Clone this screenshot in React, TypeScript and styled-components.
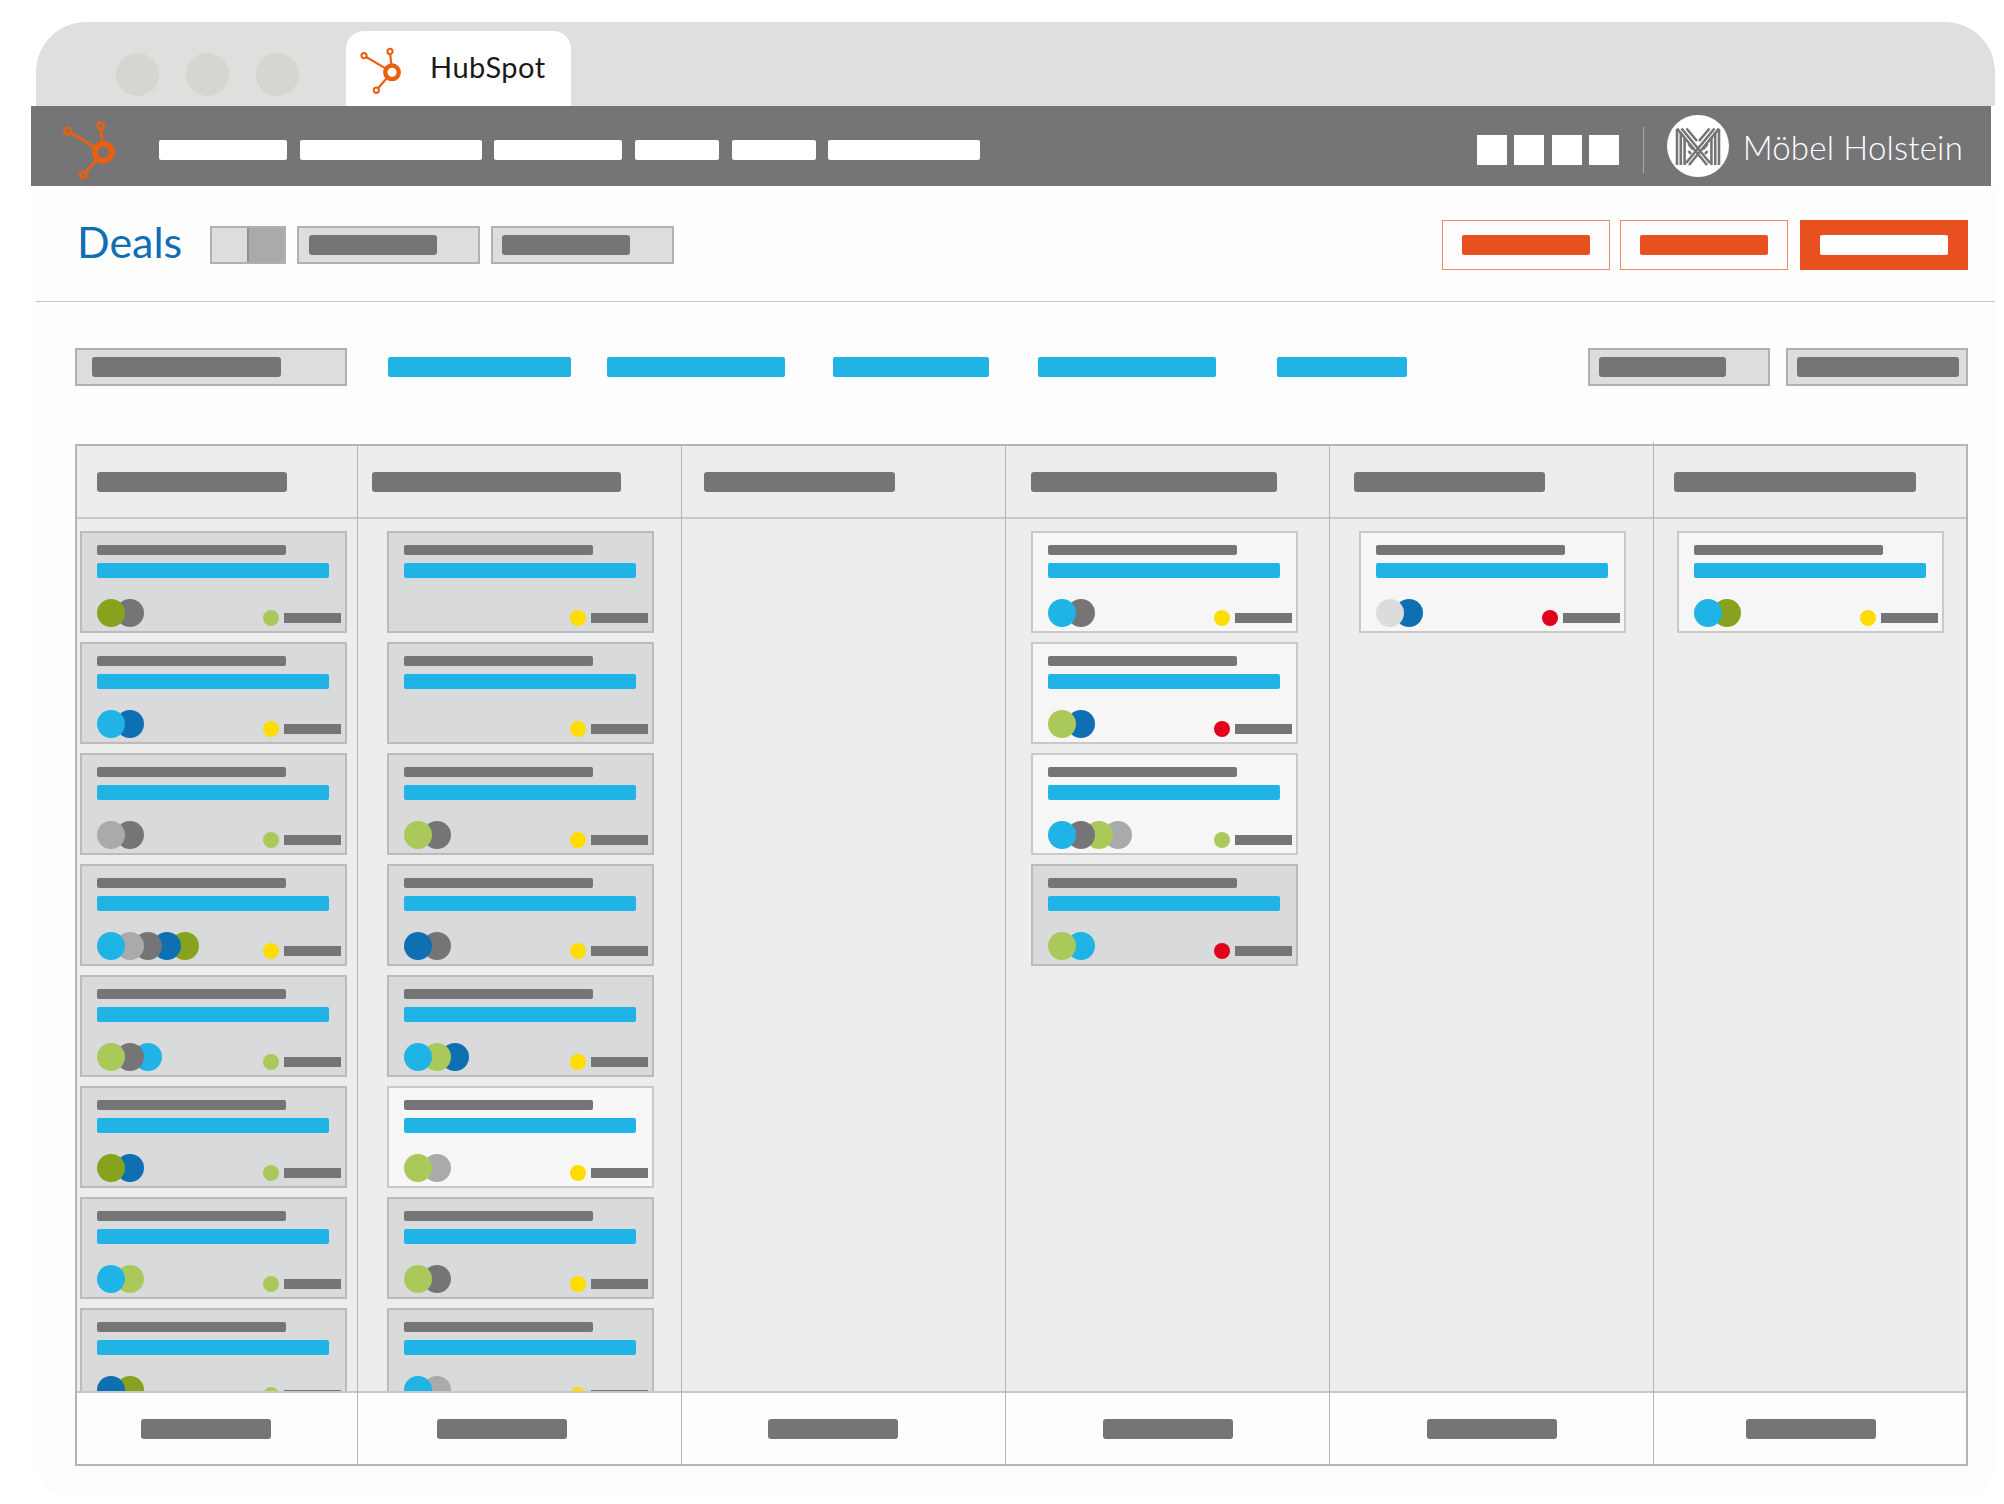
import React from "react";
import styled, { createGlobalStyle } from "styled-components";

const GREY = "#757577";
const SILVER = "#a9aaab";
const PALE = "#dcdcdc";
const CYAN = "#1fb3e6";
const BLUE = "#0e6fb3";
const OLIVE = "#87a21d";
const LIME = "#abc95a";
const YELLOW = "#ffdd00";
const RED = "#e2001a";
const ORANGE = "#e8501f";
const PAPER = "#fefdfe";

type CardData = { avatars: string[]; dot: string; light?: boolean };

const columns: {
  width: number;
  headInset: number;
  headWidth: number;
  cardInset: number;
  footInset: number;
  cards: CardData[];
}[] = [
  {
    width: 281,
    headInset: 20,
    headWidth: 190,
    cardInset: 3,
    footInset: 64,
    cards: [
      { avatars: [OLIVE, GREY], dot: LIME },
      { avatars: [CYAN, BLUE], dot: YELLOW },
      { avatars: [SILVER, GREY], dot: LIME },
      { avatars: [CYAN, SILVER, GREY, BLUE, OLIVE], dot: YELLOW },
      { avatars: [LIME, GREY, CYAN], dot: LIME },
      { avatars: [OLIVE, BLUE], dot: LIME },
      { avatars: [CYAN, LIME], dot: LIME },
      { avatars: [BLUE, OLIVE], dot: LIME },
    ],
  },
  {
    width: 324,
    headInset: 14,
    headWidth: 249,
    cardInset: 29,
    footInset: 79,
    cards: [
      { avatars: [], dot: YELLOW },
      { avatars: [], dot: YELLOW },
      { avatars: [LIME, GREY], dot: YELLOW },
      { avatars: [BLUE, GREY], dot: YELLOW },
      { avatars: [CYAN, LIME, BLUE], dot: YELLOW },
      { avatars: [LIME, SILVER], dot: YELLOW, light: true },
      { avatars: [LIME, GREY], dot: YELLOW },
      { avatars: [CYAN, SILVER], dot: YELLOW },
    ],
  },
  { width: 324, headInset: 22, headWidth: 191, cardInset: 25, footInset: 86, cards: [] },
  {
    width: 324,
    headInset: 25,
    headWidth: 246,
    cardInset: 25,
    footInset: 97,
    cards: [
      { avatars: [CYAN, GREY], dot: YELLOW, light: true },
      { avatars: [LIME, BLUE], dot: RED, light: true },
      { avatars: [CYAN, GREY, LIME, SILVER], dot: LIME, light: true },
      { avatars: [LIME, CYAN], dot: RED },
    ],
  },
  {
    width: 324,
    headInset: 24,
    headWidth: 191,
    cardInset: 29,
    footInset: 97,
    cards: [{ avatars: [PALE, BLUE], dot: RED, light: true }],
  },
  {
    width: 312,
    headInset: 20,
    headWidth: 242,
    cardInset: 23,
    footInset: 92,
    cards: [{ avatars: [CYAN, OLIVE], dot: YELLOW, light: true }],
  },
];

const navItems = [128, 182, 128, 84, 84, 152];
const filterTabs = [
  { width: 183, gap: 41 },
  { width: 178, gap: 36 },
  { width: 156, gap: 48 },
  { width: 178, gap: 49 },
  { width: 130, gap: 61 },
];

const Sprocket = ({ width, height }: { width: number; height: number }) => (
  <svg width={width} height={height} viewBox="0 0 56 64" fill="none" stroke="#ec5f0f">
    <path d="M42.3 24 L41 11 M34.5 29 L10.5 14.8 M36 42.5 L25.5 54.5" strokeWidth="2.8" />
    <circle cx="43.3" cy="34.3" r="8.6" strokeWidth="5.6" />
    <circle cx="40.7" cy="7.7" r="3.3" strokeWidth="2.6" />
    <circle cx="7.7" cy="13" r="3.3" strokeWidth="2.6" />
    <circle cx="23.3" cy="57" r="3.3" strokeWidth="2.6" />
  </svg>
);

const MobelMark = () => (
  <svg width="62" height="62" viewBox="0 0 62 62">
    <circle cx="31" cy="31" r="31" fill="#fff" />
    <g stroke={GREY} strokeWidth="2.6" fill="none">
      <path d="M10 50V14M13.8 50V17M17.6 50V22" />
      <path d="M52 50V14M48.2 50V17M44.4 50V22" />
      <path d="M10 13.5L40 50M14.5 13.5L43 48M19.5 13.5L30 26" />
      <path d="M52 13.5L22 50M47.5 13.5L19 48M42.5 13.5L32 26" />
      <path d="M21.5 29L26 34.5M21.5 36L24 39M40.5 29L36 34.5M40.5 36L38 39" />
    </g>
  </svg>
);

const App = () => (
  <Page>
    <GlobalStyle />
    <ChromeBar>
      <WindowDot />
      <WindowDot />
      <WindowDot />
      <BrowserTab>
        <TabIcon>
          <Sprocket width={44} height={51} />
        </TabIcon>
        <TabLabel>HubSpot</TabLabel>
      </BrowserTab>
    </ChromeBar>

    <NavBar>
      <NavIcon>
        <Sprocket width={56} height={64} />
      </NavIcon>
      <NavLinks>
        {navItems.map((w, i) => (
          <NavLink key={i} $w={w} />
        ))}
      </NavLinks>
      <NavRight>
        <NavSquare />
        <NavSquare />
        <NavSquare />
        <NavSquare />
        <NavDivider />
        <MobelMark />
        <AccountName>Möbel Holstein</AccountName>
      </NavRight>
    </NavBar>

    <Content>
      <Toolbar>
        <PageTitle>Deals</PageTitle>
        <ViewToggle>
          <ToggleSide />
          <ToggleSide $active />
        </ViewToggle>
        <SelectBox $w={183} $inset={10}>
          <SelectBar $w={128} />
        </SelectBox>
        <SelectBox $w={183} $inset={9}>
          <SelectBar $w={128} />
        </SelectBox>
        <ToolbarActions>
          <OutlineButton>
            <ButtonBar />
          </OutlineButton>
          <OutlineButton>
            <ButtonBar />
          </OutlineButton>
          <SolidButton>
            <ButtonBar $white />
          </SolidButton>
        </ToolbarActions>
      </Toolbar>

      <FilterRow>
        <SelectBox $w={272} $inset={15}>
          <SelectBar $w={189} />
        </SelectBox>
        {filterTabs.map((t, i) => (
          <FilterTab key={i} $w={t.width} $gap={t.gap} />
        ))}
        <FilterRight>
          <SelectBox $w={182} $inset={9}>
            <SelectBar $w={127} />
          </SelectBox>
          <SelectBox $w={182} $inset={9}>
            <SelectBar $w={162} />
          </SelectBox>
        </FilterRight>
      </FilterRow>

      <Board>
        {columns.map((col, i) => (
          <Column key={i} $w={col.width} $notch={i === columns.length - 1}>
            <ColumnHead $inset={col.headInset}>
              <HeadBar $w={col.headWidth} />
            </ColumnHead>
            <ColumnBody $inset={col.cardInset}>
              {col.cards.map((card, j) => (
                <Card key={j} $light={card.light}>
                  <CardTitle />
                  <CardLink />
                  <CardFoot>
                    <AvatarStack>
                      {card.avatars.map((c, k) => (
                        <Avatar key={k} $color={c} $z={card.avatars.length - k} />
                      ))}
                    </AvatarStack>
                    <CardMeta>
                      <StatusDot $color={card.dot} />
                      <MetaBar />
                    </CardMeta>
                  </CardFoot>
                </Card>
              ))}
            </ColumnBody>
            <ColumnFoot $inset={col.footInset}>
              <FootBar />
            </ColumnFoot>
          </Column>
        ))}
      </Board>
    </Content>
  </Page>
);

export default App;

const GlobalStyle = createGlobalStyle`
  * {
    box-sizing: border-box;
  }
  html,
  body {
    margin: 0;
    background: #fff;
  }
`;

const Page = styled.div`
  width: 2004px;
  height: 1504px;
  padding: 22px 0 0 31px;
  overflow: hidden;
  font-family: Lato, "Open Sans", sans-serif;
`;

const ChromeBar = styled.div`
  display: flex;
  align-items: flex-start;
  width: 1959px;
  height: 84px;
  margin-left: 5px;
  padding: 9px 0 0 80px;
  gap: 27px;
  background: #dfdfdd;
  border-radius: 50px 50px 0 0;
`;

const WindowDot = styled.div`
  width: 43px;
  height: 43px;
  margin-top: 22px;
  border-radius: 50%;
  background: #d5d6d2;
`;

const BrowserTab = styled.div`
  display: flex;
  align-items: center;
  gap: 28px;
  width: 225px;
  height: 75px;
  margin-left: 20px;
  padding: 0 0 4px 12px;
  background: #fff;
  border-radius: 18px 18px 0 0;
`;

const TabIcon = styled.div`
  display: flex;
  margin-top: 7px;
`;

const TabLabel = styled.span`
  font-size: 29px;
  font-weight: 400;
  letter-spacing: 0.5px;
  color: #1a1a1a;
`;

const NavBar = styled.div`
  display: flex;
  align-items: center;
  width: 1960px;
  height: 80px;
  padding: 0 28px 0 29px;
  background: ${GREY};
`;

const NavIcon = styled.div`
  display: flex;
  margin-top: 8px;
`;

const NavLinks = styled.div`
  display: flex;
  gap: 12.7px;
  margin: 8px 0 0 43px;
`;

const NavLink = styled.div<{ $w: number }>`
  width: ${(p) => p.$w}px;
  height: 20px;
  background: #fff;
  border-radius: 2px;
`;

const NavRight = styled.div`
  display: flex;
  align-items: center;
  gap: 7.5px;
  margin-left: auto;
`;

const NavSquare = styled.div`
  width: 30px;
  height: 30px;
  margin-top: 8px;
  background: #fff;
`;

const NavDivider = styled.div`
  width: 1px;
  height: 46px;
  margin: 8px 16px 0 16px;
  background: #a9aaab;
`;

const AccountName = styled.span`
  margin: 2px 0 0 6px;
  font-size: 33px;
  font-weight: 300;
  letter-spacing: 0.2px;
  color: #fff;
  white-space: nowrap;
`;

const Content = styled.div`
  width: 1959px;
  height: 1309px;
  margin-left: 5px;
  background: ${PAPER};
  border-radius: 0 0 30px 30px;
`;

const Toolbar = styled.div`
  display: flex;
  align-items: flex-start;
  gap: 11px;
  height: 116px;
  padding: 34px 27px 0 41px;
  border-bottom: 1px solid #c6c6c6;
`;

const PageTitle = styled.h1`
  width: 122px;
  margin: -7px 0 0;
  font-size: 43px;
  line-height: 58px;
  font-weight: 400;
  color: ${BLUE};
`;

const ViewToggle = styled.div`
  display: flex;
  width: 76px;
  height: 38px;
  margin-top: 6px;
  border: 2px solid #b0b0b0;
`;

const ToggleSide = styled.div<{ $active?: boolean }>`
  flex: 1;
  background: ${(p) => (p.$active ? SILVER : "#dcdddd")};
  border-left: ${(p) => (p.$active ? "2px solid #8f9091" : "none")};
`;

const SelectBox = styled.div<{ $w: number; $inset: number }>`
  display: flex;
  align-items: center;
  width: ${(p) => p.$w}px;
  height: 38px;
  margin-top: 6px;
  padding-left: ${(p) => p.$inset}px;
  background: #dcdddd;
  border: 2px solid #b0b0b0;
`;

const SelectBar = styled.div<{ $w: number }>`
  width: ${(p) => p.$w}px;
  height: 20px;
  background: ${GREY};
  border-radius: 3px;
`;

const ToolbarActions = styled.div`
  display: flex;
  gap: 10px;
  margin-left: auto;
`;

const OutlineButton = styled.div`
  display: flex;
  align-items: center;
  justify-content: center;
  width: 168px;
  height: 50px;
  border: 1px solid #f08a66;
`;

const SolidButton = styled(OutlineButton)`
  margin-left: 2.5px;
  background: ${ORANGE};
  border-color: ${ORANGE};
`;

const ButtonBar = styled.div<{ $white?: boolean }>`
  width: 128px;
  height: 20px;
  background: ${(p) => (p.$white ? "#fff" : ORANGE)};
  border-radius: 2px;
`;

const FilterRow = styled.div`
  display: flex;
  align-items: center;
  height: 142px;
  padding: 0 27px 18px 39px;
`;

const FilterTab = styled.div<{ $w: number; $gap: number }>`
  width: ${(p) => p.$w}px;
  height: 20px;
  margin: 6px 0 0 ${(p) => p.$gap}px;
  background: ${CYAN};
  border-radius: 2px;
`;

const FilterRight = styled.div`
  display: flex;
  gap: 16px;
  margin-left: auto;
`;

const Board = styled.div`
  display: flex;
  width: 1893px;
  height: 1022px;
  margin-left: 39px;
  border: 2px solid #b5b5b5;
  background: #ededed;
`;

const Column = styled.div<{ $w: number; $notch: boolean }>`
  position: relative;
  display: flex;
  flex-direction: column;
  flex: none;
  width: ${(p) => p.$w}px;
  &:not(:last-child) {
    border-right: 1px solid #b5b5b5;
  }
  &::before {
    content: "";
    display: ${(p) => (p.$notch ? "block" : "none")};
    position: absolute;
    top: -4px;
    left: -1px;
    width: 1px;
    height: 4px;
    background: #b5b5b5;
  }
`;

const ColumnHead = styled.div<{ $inset: number }>`
  display: flex;
  align-items: center;
  flex: none;
  height: 73px;
  padding-left: ${(p) => p.$inset}px;
  background: #ecedec;
  border-bottom: 2px solid #c8c8c8;
`;

const HeadBar = styled.div<{ $w: number }>`
  width: ${(p) => p.$w}px;
  height: 20px;
  background: ${GREY};
  border-radius: 3px;
`;

const ColumnBody = styled.div<{ $inset: number }>`
  flex: 1;
  min-height: 0;
  overflow: hidden;
  padding: 12px 0 0 ${(p) => p.$inset}px;
`;

const Card = styled.div<{ $light?: boolean }>`
  width: 267px;
  height: 102px;
  margin-bottom: 9px;
  padding: 12px 4px 0 15px;
  background: ${(p) => (p.$light ? "#f6f6f6" : "#d8dadc")};
  border: 2px solid ${(p) => (p.$light ? "#c9c9c9" : "#b9bbbd")};
`;

const CardTitle = styled.div`
  width: 189px;
  height: 10px;
  background: ${GREY};
  border-radius: 2px;
`;

const CardLink = styled.div`
  width: 232px;
  height: 15px;
  margin-top: 8px;
  background: ${CYAN};
  border-radius: 2px;
`;

const CardFoot = styled.div`
  display: flex;
  align-items: flex-start;
  justify-content: space-between;
  margin-top: 21px;
`;

const AvatarStack = styled.div`
  display: flex;
  height: 28px;
`;

const Avatar = styled.div<{ $color: string; $z: number }>`
  position: relative;
  z-index: ${(p) => p.$z};
  width: 28px;
  height: 28px;
  border-radius: 50%;
  background: ${(p) => p.$color};
  &:not(:first-child) {
    margin-left: -9.4px;
  }
`;

const CardMeta = styled.div`
  display: flex;
  align-items: center;
  gap: 5px;
  margin-top: 11px;
`;

const StatusDot = styled.div<{ $color: string }>`
  width: 16px;
  height: 16px;
  border-radius: 50%;
  background: ${(p) => p.$color};
`;

const MetaBar = styled.div`
  width: 57px;
  height: 10px;
  background: ${GREY};
`;

const ColumnFoot = styled.div<{ $inset: number }>`
  display: flex;
  align-items: center;
  flex: none;
  height: 73px;
  padding-left: ${(p) => p.$inset}px;
  background: ${PAPER};
  border-top: 2px solid #c8c8c8;
`;

const FootBar = styled.div`
  width: 130px;
  height: 20px;
  background: ${GREY};
  border-radius: 3px;
`;
